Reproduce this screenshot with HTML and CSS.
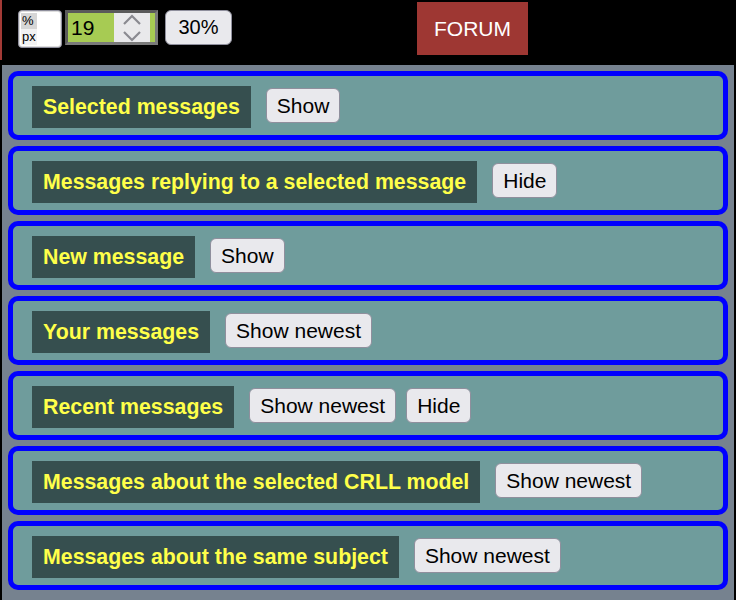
FILE: index.html
```html
<!DOCTYPE html>
<html lang="en">

<head>
  <meta charset="UTF-8">
  <title>Forum</title>
  <link rel="stylesheet" href="styles.css">
</head>

<body>

  <!-- Top bar -->
  <div id="topBar">
    <div class="unitList">
      <span class="unit selected">%</span>
      <span class="unit">px</span>
    </div>
    <div class="sizeInput">
      <span class="sizeValue">19</span>
      <span class="spinner">
        <svg width="22" height="30" viewBox="0 0 22 30">
          <path d="M3 11 L11 3 L19 11" fill="none" stroke="#8a8a90" stroke-width="2.2"/>
          <path d="M3 19 L11 27 L19 19" fill="none" stroke="#8a8a90" stroke-width="2.2"/>
        </svg>
      </span>
    </div>
    <button class="btn zoomBtn">30%</button>
    <div id="forumTab">FORUM</div>
  </div>

  <!-- Message panels -->
  <div id="panels">
    <div class="panel">
      <h2>Selected messages</h2>
      <button class="btn">Show</button>
    </div>
    <div class="panel">
      <h2>Messages replying to a selected message</h2>
      <button class="btn">Hide</button>
    </div>
    <div class="panel">
      <h2>New message</h2>
      <button class="btn">Show</button>
    </div>
    <div class="panel">
      <h2>Your messages</h2>
      <button class="btn">Show newest</button>
    </div>
    <div class="panel">
      <h2>Recent messages</h2>
      <button class="btn">Show newest</button>
      <button class="btn">Hide</button>
    </div>
    <div class="panel">
      <h2>Messages about the selected CRLL model</h2>
      <button class="btn">Show newest</button>
    </div>
    <div class="panel">
      <h2>Messages about the same subject</h2>
      <button class="btn">Show newest</button>
    </div>
  </div>

</body>

</html>
```

FILE: styles.css
```css
body {
  margin: 0;
  background: black;
  font-family: 'Liberation Sans', Arial, sans-serif;
  overflow: hidden;
}

#topBar {
  display: flex;
  align-items: flex-start;
  height: 60px;
  margin-bottom: 5px;
  padding-left: 16px;
  border-left: 2px solid #a33a36;
}

.unitList {
  display: flex;
  flex-direction: column;
  width: 40px;
  height: 34px;
  margin-top: 10px;
  padding: 2px 0 0 2px;
  background: white;
  border: 1px solid #8f8f9d;
  border-radius: 4px;
  box-shadow: inset 0 0 0 1px #ddd;
}

.unit {
  width: 15px;
  height: 16px;
  padding-left: 1px;
  font-size: 13px;
  line-height: 16px;
  color: black;
  background: #f2f2f2;
}

.unit.selected {
  background: #d6d6d6;
}

.sizeInput {
  display: flex;
  align-items: stretch;
  width: 87px;
  height: 29px;
  margin: 10px 0 0 3px;
  background: #a7cb53;
  border: 3px solid;
  border-color: #5a5a5a #7a7a7a #7a7a7a #5a5a5a;
}

.sizeValue {
  flex: 1;
  padding-left: 3px;
  font-size: 21px;
  line-height: 29px;
  color: black;
}

.spinner {
  display: flex;
  align-items: center;
  justify-content: center;
  width: 36px;
  margin-right: 5px;
  background: #e9e9eb;
}

.btn {
  height: 35px;
  padding: 0 10px;
  font-family: 'Liberation Sans', Arial, sans-serif;
  font-size: 21px;
  color: black;
  background: #e9e9ed;
  border: 1px solid #8f8f9d;
  border-radius: 6px;
}

.zoomBtn {
  margin: 10px 0 0 7px;
  width: 67px;
  font-size: 20px;
}

#forumTab {
  margin: 2px 0 0 185px;
  width: 111px;
  height: 53px;
  line-height: 53px;
  text-align: center;
  font-size: 21px;
  color: white;
  background: #9e3733;
}

#panels {
  display: flex;
  flex-direction: column;
  gap: 6px;
  height: 535px;
  margin: 0 2px;
  padding: 6px;
  background: #76828f;
}

.panel {
  display: flex;
  align-items: flex-start;
  gap: 10px;
  padding: 10px 15px 7px 19px;
  background: #6f9c9c;
  border: 5px solid #0000ff;
  border-radius: 10px;
}

.panel h2 {
  margin: 0 5px 0 0;
  height: 42px;
  padding: 0 11px;
  line-height: 42px;
  font-size: 21.33px;
  font-weight: bold;
  color: #ffff4a;
  background: #364f4f;
}

.panel .btn {
  margin-top: 2px;
}
```
